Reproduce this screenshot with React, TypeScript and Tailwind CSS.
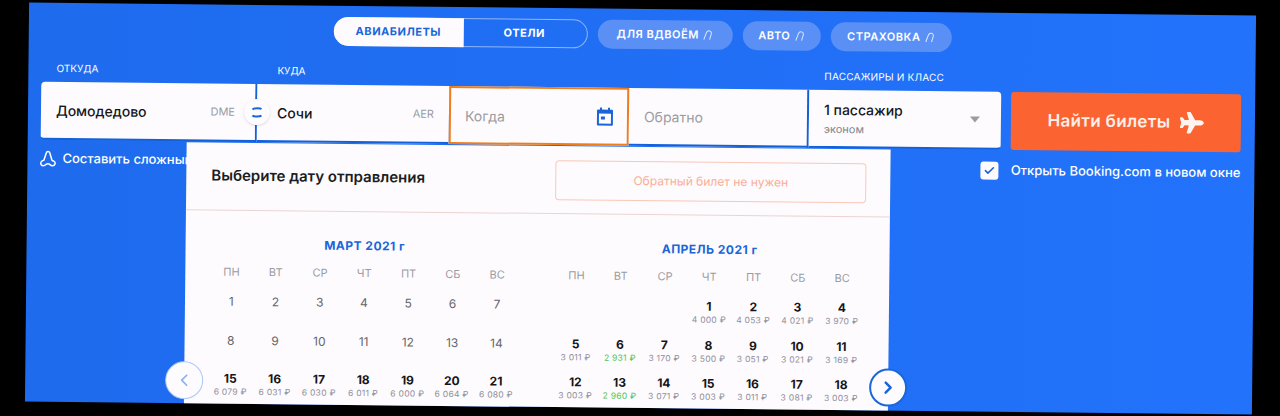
import { FaPlane } from "react-icons/fa";
import { ChevronLeft, ChevronRight, Check } from "lucide-react";

const WEEK = ["ПН", "ВТ", "СР", "ЧТ", "ПТ", "СБ", "ВС"];

type Day = { d?: number; price?: string; green?: boolean };

const MARCH: Day[] = [
  { d: 1 }, { d: 2 }, { d: 3 }, { d: 4 }, { d: 5 }, { d: 6 }, { d: 7 },
  { d: 8 }, { d: 9 }, { d: 10 }, { d: 11 }, { d: 12 }, { d: 13 }, { d: 14 },
  { d: 15, price: "6 079 ₽" }, { d: 16, price: "6 031 ₽" }, { d: 17, price: "6 030 ₽" }, { d: 18, price: "6 011 ₽" },
  { d: 19, price: "6 000 ₽" }, { d: 20, price: "6 064 ₽" }, { d: 21, price: "6 080 ₽" },
];

const APRIL: Day[] = [
  {}, {}, {},
  { d: 1, price: "4 000 ₽" }, { d: 2, price: "4 053 ₽" }, { d: 3, price: "4 021 ₽" }, { d: 4, price: "3 970 ₽" },
  { d: 5, price: "3 011 ₽" }, { d: 6, price: "2 931 ₽", green: true }, { d: 7, price: "3 170 ₽" }, { d: 8, price: "3 500 ₽" },
  { d: 9, price: "3 051 ₽" }, { d: 10, price: "3 021 ₽" }, { d: 11, price: "3 169 ₽" },
  { d: 12, price: "3 003 ₽" }, { d: 13, price: "2 960 ₽", green: true }, { d: 14, price: "3 071 ₽" }, { d: 15, price: "3 003 ₽" },
  { d: 16, price: "3 011 ₽" }, { d: 17, price: "3 081 ₽" }, { d: 18, price: "3 003 ₽" },
];

function ArchIcon() {
  return (
    <svg width="10" height="11" viewBox="0 0 10 11" fill="none" stroke="currentColor" strokeWidth="1" className="opacity-80">
      <path d="M1 10 3.6 3C4.2 1.4 5.4 1 6.6 1.2 8.2 1.5 8.8 2.8 8.4 4.4L6.8 10" />
    </svg>
  );
}

function RouteIcon() {
  return (
    <svg width="17" height="18" viewBox="0 0 17 18" fill="none" stroke="white" strokeWidth="1.5" strokeLinejoin="round">
      <path d="M6.8 3C7.2 1.4 9.8 1.4 10.2 3L12.6 10.6C15.4 11 16.4 13.2 15.2 15 14 16.4 12 16.2 10.8 15 9.4 13.8 7.6 13.8 6.2 15 5 16.2 3 16.4 1.8 15 .6 13.2 1.6 11 4.4 10.6Z" />
    </svg>
  );
}

function CalendarIcon() {
  return (
    <svg width="18" height="20" viewBox="0 0 18 20" fill="#1a66d9">
      <path d="M4 1h2v2h6V1h2v2h2a1 1 0 0 1 1 1v14a1 1 0 0 1-1 1H2a1 1 0 0 1-1-1V4a1 1 0 0 1 1-1h2V1Zm-1 6v10h12V7H3Z" />
      <rect x="5" y="10" width="4" height="3" />
    </svg>
  );
}

function SwapIcon() {
  return (
    <svg width="12" height="13" viewBox="0 0 12 13" fill="none" stroke="#1a66d9" strokeWidth="2">
      <path d="M1.5 3.5C3 2 9 2 10.5 3" />
      <path d="M1.5 9.5C3 11 9 11 10.5 9.5" />
    </svg>
  );
}

function Month({ title, days }: { title: string; days: Day[] }) {
  return (
    <div className="w-[310px]">
      <div className="text-center text-[12px] leading-4 font-bold tracking-[0.04em] text-[#1a66d9]">{title}</div>
      <div className="grid grid-cols-7 mt-[12px] mb-[16px]">
        {WEEK.map((w) => (
          <div key={w} className="text-center text-[11px] leading-[14px] text-[#9b9ba3]">
            {w}
          </div>
        ))}
      </div>
      <div className="grid grid-cols-7">
        {days.map((day, i) => (
          <div key={i} className="h-[38.5px] flex flex-col items-center">
            {day.d && (
              <span className={`text-[12px] leading-[14px] ${day.price ? "font-bold text-[#15151a]" : "text-[#66666c]"}`}>
                {day.d}
              </span>
            )}
            {day.price && (
              <span className={`text-[8.5px] leading-3 tracking-[0.03em] ${day.green ? "text-[#3fc95a]" : "text-[#8f8f9c]"}`}>
                {day.price}
              </span>
            )}
          </div>
        ))}
      </div>
    </div>
  );
}

export default function App() {
  return (
    <div className="w-[1280px] h-[416px] bg-black overflow-hidden font-['Inter',sans-serif] pl-[27px] pt-[9px]">
      <div className="relative w-[1227px] h-[399px] rotate-[0.6deg] overflow-hidden bg-gradient-to-r from-[#1e6bee] to-[#2272fb]">
        {/* tabs */}
        <div className="flex justify-center gap-[10px] pt-[11px]">
          <div className="flex w-[254px] h-[29px] rounded-full border border-white/50 text-[11px] font-bold tracking-[0.05em]">
            <div className="w-[130px] -m-px rounded-l-full bg-[#fdfbfd] text-[#1a66d9] flex items-center justify-center">
              АВИАБИЛЕТЫ
            </div>
            <div className="flex-1 text-white flex items-center justify-center">ОТЕЛИ</div>
          </div>
          <div className="w-[135px] h-[29px] rounded-full bg-[#5a90f6] text-white text-[11px] font-semibold tracking-[0.05em] flex items-center justify-center gap-1">
            ДЛЯ ВДВОЁМ <ArchIcon />
          </div>
          <div className="w-[78px] h-[29px] rounded-full bg-[#5a90f6] text-white text-[11px] font-semibold tracking-[0.05em] flex items-center justify-center gap-1">
            АВТО <ArchIcon />
          </div>
          <div className="w-[121px] h-[29px] rounded-full bg-[#5a90f6] text-white text-[11px] font-semibold tracking-[0.05em] flex items-center justify-center gap-1">
            СТРАХОВКА <ArchIcon />
          </div>
        </div>

        {/* search form */}
        <div className="mt-[17px] ml-[13px] grid grid-cols-[216px_192px_180px_180px_192px_10px_230px] grid-rows-[22px_58px_auto] w-fit">
          <div className="pl-[15px] text-[10px] leading-4 text-white">ОТКУДА</div>
          <div className="pl-[20px] text-[10px] leading-4 text-white">КУДА</div>
          <div />
          <div />
          <div className="pl-[15px] text-[10px] leading-4 text-white tracking-[0.02em]">ПАССАЖИРЫ И КЛАСС</div>
          <div />
          <div />

          <div className="bg-[#fdfbfd] rounded-l border-r-2 border-b-2 border-[#1460d6] pl-[15px] pr-[20px] flex items-center justify-between">
            <span className="text-[14px] font-medium text-[#15151a]">Домодедово</span>
            <span className="text-[11px] text-[#9b9ba3]">DME</span>
          </div>
          <div className="bg-[#fdfbfd] border-b-2 border-[#1460d6] pl-[20px] pr-[15px] flex items-center justify-between">
            <span className="text-[14px] font-medium text-[#15151a]">Сочи</span>
            <span className="text-[11px] text-[#9b9ba3]">AER</span>
          </div>
          <div className="bg-[#fdfbfd] border-2 border-[#ef7d1a] pl-[14px] pr-[13px] flex items-center justify-between">
            <span className="text-[14px] text-[#9b9ba3]">Когда</span>
            <CalendarIcon />
          </div>
          <div className="bg-[#fdfbfd] border-r-2 border-b-2 border-[#1460d6] pl-[15px] flex items-center">
            <span className="text-[14px] text-[#9b9ba3]">Обратно</span>
          </div>
          <div className="bg-[#fdfbfd] rounded-r border-b-2 border-[#1460d6] pl-[15px] pr-[21px] flex items-center justify-between">
            <div className="flex flex-col gap-[3px]">
              <span className="text-[14px] leading-[18px] font-medium text-[#15151a]">1 пассажир</span>
              <span className="text-[11px] leading-[14px] text-[#85858d]">эконом</span>
            </div>
            <span className="w-0 h-0 border-x-[5px] border-x-transparent border-t-[6px] border-t-[#9b9ba3]" />
          </div>
          <div />
          <button className="bg-[#fb6431] rounded-[3px] text-[#fdeee8] text-[17px] font-semibold tracking-[0.02em] flex items-center justify-center gap-[10px]">
            Найти билеты <FaPlane className="text-[#fdf4f0] text-[24px]" />
          </button>

          <div className="col-span-5 pt-[9px] flex items-center gap-[6px] text-[13px] font-medium text-white self-start -ml-px">
            <RouteIcon />
            Составить сложный маршрут
          </div>
          <div />
          <div className="col-start-7 pt-[11px] flex items-center justify-end gap-[12px] whitespace-nowrap text-[13px] font-medium text-white -ml-[40px]">
            <span className="w-[18px] h-[18px] rounded-[3px] bg-[#fdfbfd] flex items-center justify-center shrink-0">
              <Check size={12} strokeWidth={3} className="text-[#1460d6]" />
            </span>
            Открыть Booking.com в новом окне
          </div>
        </div>

        {/* date dropdown */}
        <div className="absolute left-[159px] top-[138px] w-[704px] h-[290px] bg-[#fdfbfd]">
          <div className="h-[68px] border-b border-[#ecd4d2] pl-[25px] pr-[24px] flex items-center justify-between">
            <span className="text-[15px] font-semibold text-[#1c1c22]">Выберите дату отправления</span>
            <div className="w-[311px] h-[40px] rounded border border-[#f9c8b8] text-[12px] text-[#f9ae98] flex items-center justify-center">
              Обратный билет не нужен
            </div>
          </div>
          <div className="pt-[26px] pl-[24px] flex gap-[35px]">
            <Month title="МАРТ 2021 г" days={MARCH} />
            <Month title="АПРЕЛЬ 2021 г" days={APRIL} />
          </div>
          <button className="absolute -left-[19px] top-[219px] w-[38px] h-[38px] rounded-full bg-[#fdfbfd] border border-[#a9c6f5] flex items-center justify-center">
            <ChevronLeft size={20} className="text-[#8db0ea]" />
          </button>
          <button className="absolute -right-[19px] top-[219px] w-[38px] h-[38px] rounded-full bg-[#fdfbfd] border-2 border-[#1a66d9] flex items-center justify-center">
            <ChevronRight size={20} strokeWidth={3} className="text-[#1a66d9]" />
          </button>
        </div>

        {/* swap button */}
        <div className="absolute z-10 left-[216px] top-[94px] w-[26px] h-[26px] rounded-full bg-[#fdfbfd] shadow flex items-center justify-center">
          <SwapIcon />
        </div>
      </div>
    </div>
  );
}
